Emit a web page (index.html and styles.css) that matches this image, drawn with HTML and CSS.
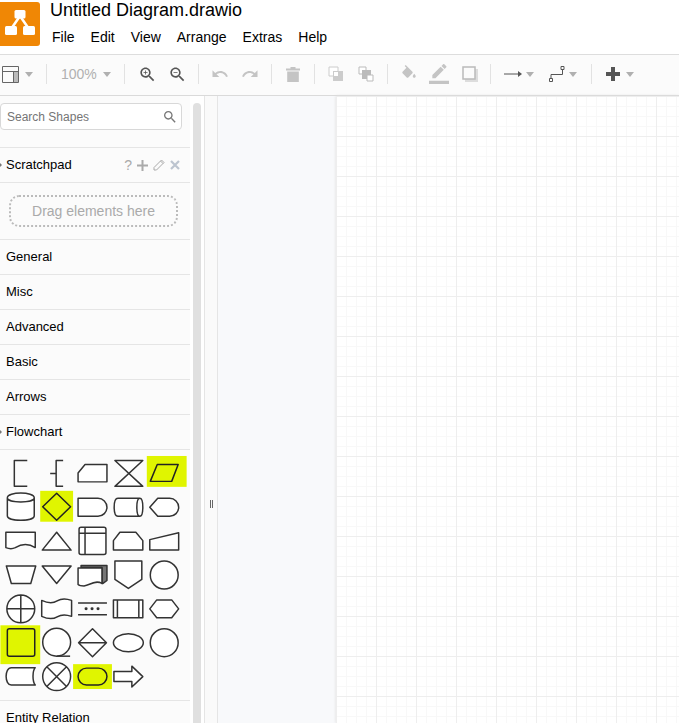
FILE: index.html
```html
<!DOCTYPE html>
<html lang="en">
<head>
  <meta charset="UTF-8">
  <meta name="viewport" content="width=device-width, initial-scale=1.0">
  <title>Untitled Diagram.drawio</title>
  <link rel="stylesheet" href="styles.css">
</head>
<body>
  <header class="header">
    <div class="logo">
      <svg width="40" height="44" viewBox="0 0 40 44">
        <path d="M20 14 L11 27 M20 14 L29 27" stroke="#fff" stroke-width="2.500" fill="none"/>
        <rect x="14.500" y="8" width="11" height="8.500" rx="1.500" fill="#fff"/>
        <rect x="5" y="24" width="12" height="9" rx="1.500" fill="#fff"/>
        <rect x="23" y="24" width="12" height="9" rx="1.500" fill="#fff"/>
      </svg>
    </div>
    <div class="titles">
      <div class="title">Untitled Diagram.drawio</div>
      <nav class="menu">
        <span>File</span><span>Edit</span><span>View</span><span>Arrange</span><span>Extras</span><span>Help</span>
      </nav>
    </div>
  </header>

  <div class="toolbar">
    <span class="tool tool-layout">
      <svg width="17" height="17" viewBox="0 0 17 17"><rect x="12" y="5" width="4" height="11" fill="#bbb"/><path d="M.5.5h16v16H.5zM.5 5.500h16M11.500 5.500v11" fill="none" stroke="#666"/></svg>
    </span>
    <span class="caret"></span>
    <span class="sep sep-first"></span>
    <span class="zoom-label">100%</span>
    <span class="caret"></span>
    <span class="sep sep-second"></span>
    <span class="tool"><svg class="on" viewBox="0 0 24 24"><path d="M15.5 14h-.79l-.28-.27C15.41 12.59 16 11.11 16 9.5 16 5.91 13.09 3 9.5 3S3 5.91 3 9.5 5.91 16 9.5 16c1.61 0 3.09-.59 4.23-1.57l.27.28v.79l5 4.99L20.49 19l-4.99-5zm-6 0C7.01 14 5 11.99 5 9.5S7.01 5 9.5 5 14 7.01 14 9.5 11.99 14 9.5 14zm2.5-4h-2v2H9v-2H7V9h2V7h1v2h2v1z"/></svg></span>
    <span class="tool"><svg class="on" viewBox="0 0 24 24"><path d="M15.5 14h-.79l-.28-.27C15.41 12.59 16 11.11 16 9.5 16 5.91 13.09 3 9.5 3S3 5.91 3 9.5 5.91 16 9.5 16c1.61 0 3.09-.59 4.23-1.57l.27.28v.79l5 4.99L20.49 19l-4.99-5zm-6 0C7.01 14 5 11.99 5 9.5S7.01 5 9.5 5 14 7.01 14 9.5 11.99 14 9.5 14zM7 9h5v1H7z"/></svg></span>
    <span class="sep sep-tight"></span>
    <span class="tool"><svg viewBox="0 0 24 24"><path d="M12.5 8c-2.65 0-5.05.99-6.9 2.6L2 7v9h9l-3.62-3.62c1.39-1.16 3.16-1.88 5.12-1.88 3.54 0 6.55 2.31 7.6 5.5l2.37-.78C21.08 11.03 17.15 8 12.5 8z"/></svg></span>
    <span class="tool"><svg viewBox="0 0 24 24"><path d="M18.4 10.6C16.55 8.99 14.15 8 11.5 8c-4.65 0-8.58 3.03-9.96 7.22L3.9 16c1.05-3.19 4.05-5.5 7.6-5.5 1.95 0 3.73.72 5.12 1.88L13 16h9V7l-3.6 3.6z"/></svg></span>
    <span class="sep"></span>
    <span class="tool"><svg class="trash" viewBox="0 0 14 15"><path d="M4.500 0h5v1.500H14v2H0v-2h4.500zM1.200 4.500h11.600V15H1.200z"/></svg></span>
    <span class="sep"></span>
    <span class="tool"><svg class="flat" viewBox="0 0 16 16"><path d="M1 1h9v9H1z" fill="#fff" stroke="#ccc"/><path d="M5 5h10v10H5z" fill="#ccc"/><path d="M6 6h4v4H6z" fill="#fff"/></svg></span>
    <span class="tool"><svg class="flat" viewBox="0 0 16 16"><path d="M1 1h7v7H1z" fill="#fff" stroke="#bbb"/><path d="M4 4h9v9H4z" fill="#bbb"/><path d="M9 9h6v6H9z" fill="#fff" stroke="#bbb"/></svg></span>
    <span class="sep"></span>
    <span class="tool"><svg viewBox="0 0 24 24"><path d="M16.56 8.94L7.62 0 6.21 1.41l2.38 2.38-5.15 5.15c-.59.59-.59 1.54 0 2.12l5.5 5.5c.29.29.68.44 1.06.44s.77-.15 1.06-.44l5.5-5.5c.59-.58.59-1.53 0-2.12zM19 11.5s-2 2.17-2 3.5c0 1.1.9 2 2 2s2-.9 2-2c0-1.33-2-3.5-2-3.5z"/></svg></span>
    <span class="tool"><svg class="wide" viewBox="0 0 24 24"><path d="M17.75 7L14 3.25l-10 10V17h3.75l10-10zm2.96-2.96c.39-.39.39-1.02 0-1.41L18.37.29c-.39-.39-1.02-.39-1.41 0L15 2.25 18.75 6l1.96-1.96zM0 20h24v4H0z"/></svg></span>
    <span class="tool tool-shadow"><svg class="flat" viewBox="0 0 16 16"><path d="M3 3h13v13H3z" fill="#ddd"/><path d="M1 1h12v12H1z" fill="#fbfbfb" stroke="#bbb" stroke-width="1.500"/></svg></span>
    <span class="sep sep-tight"></span>
    <span class="edge">
      <svg width="18" height="8" viewBox="0 0 18 8"><path d="M0 4h15" stroke="#555" fill="none"/><path d="M14 1l4 3-4 3z" fill="#555"/></svg>
    </span>
    <span class="caret caret-near"></span>
    <span class="edge edge-way">
      <svg width="16" height="16" viewBox="0 0 16 16"><path d="M2 13V8.500h11.500V3" stroke="#555" fill="none"/><path d="M.5 12.500h3v3h-3zM12 .5h3v3h-3z" fill="#fff" stroke="#555"/></svg>
    </span>
    <span class="caret caret-near"></span>
    <span class="sep sep-edge"></span>
    <span class="edge edge-plus">
      <svg width="14" height="14" viewBox="0 0 14 14"><path d="M5 0h4v5h5v4H9v5H5V9H0V5h5z" fill="#555"/></svg>
    </span>
    <span class="caret"></span>
  </div>

  <div class="main">
    <aside class="sidebar">
      <div class="panel">
        <div class="search">
          <span class="search-text">Search Shapes</span>
          <svg width="16" height="16" viewBox="0 0 24 24"><path fill="#777" d="M15.500 14h-.79l-.28-.27C15.410 12.590 16 11.110 16 9.500 16 5.910 13.090 3 9.500 3S3 5.910 3 9.500 5.910 16 9.500 16c1.610 0 3.090-.59 4.230-1.570l.27.28v.79l5 4.990L20.490 19l-4.990-5zm-6 0C7.010 14 5 11.990 5 9.500S7.010 5 9.500 5 14 7.010 14 9.500 11.990 14 9.500 14z"/></svg>
        </div>
        <div class="row open scratch">
          <span class="row-name">Scratchpad</span>
          <span class="scratch-tools">
            <span class="help">?</span>
            <svg width="11" height="11" viewBox="0 0 11 11"><path d="M4.500 0h2v4.500H11v2H6.500V11h-2V6.500H0v-2h4.500z" fill="#aaa"/></svg>
            <svg width="12" height="12" viewBox="0 0 12 12"><path d="M1 8.500L8.500 1 11 3.500 3.500 11H1zM7.500 2l2.500 2.500" fill="none" stroke="#aaa"/></svg>
            <svg width="10" height="10" viewBox="0 0 10 10"><path d="M1 1l8 8M9 1l-8 8" stroke="#bcc4cf" stroke-width="2.200" fill="none"/></svg>
          </span>
        </div>
        <div class="drop-area"><div class="drop-box">Drag elements here</div></div>
        <div class="row">General</div>
        <div class="row">Misc</div>
        <div class="row">Advanced</div>
        <div class="row">Basic</div>
        <div class="row">Arrows</div>
        <div class="row open">Flowchart</div>
        <svg class="shapes" width="190" height="251" viewBox="0 450 190 251">
          <rect class="hl" x="147" y="456" width="40" height="31"/>
          <rect class="hl" x="40" y="491" width="33" height="31"/>
          <rect class="hl" x="0" y="626" width="40" height="39"/>
          <rect class="hl" x="73" y="665" width="39" height="25"/>
          <g class="shape">
            <path class="bare" d="M27 460.500H14V486.500H27"/>
            <path class="bare" d="M63 460.500H56V486.500H63M56 473.500H50"/>
            <path d="M78 482V473L85 464.500H107V482Z"/>
            <path d="M115 460.500H143L115 486.500H143Z"/>
            <path class="on-hl" d="M157.500 464.500H178.500L172 481.500H150.500Z"/>

            <path d="M7 498C7 491.500 34 491.500 34 498V516C34 522 7 522 7 516ZM7 498C7 503.500 34 503.500 34 498"/>
            <path class="on-hl" d="M56.500 493.500L70.500 507L56.500 520.500L42.500 507Z"/>
            <path d="M78 498.500H98A9 9 0 0 1 98 516.500H78Z"/>
            <path d="M118 498.500H140C144 498.500 144 516.500 140 516.500H118C113 516.500 113 498.500 118 498.500ZM140 498.500C136 498.500 136 516.500 140 516.500"/>
            <path d="M150 507.500L158 498.500H170A9 9 0 0 1 170 516.500H158Z"/>

            <path d="M5.500 532.500H35V548C27 543 20 545 15 548C11 550 8 549 5.500 548Z"/>
            <path d="M56.500 532.500L71 550.500H42Z"/>
            <path d="M81 527.500H104Q106 527.500 106 529.500V553Q106 555 104 555H81Q79 555 79 553V529.500Q79 527.500 81 527.500ZM79 533.500H106M85 527.500V555"/>
            <path d="M113.500 541L120 532.500H136L143 541V550.500H113.500Z"/>
            <path d="M150 540L179 533V550.500H150Z"/>

            <path d="M6 566.500H35.500L30.500 584H11Z"/>
            <path d="M42 566.500H71L56.500 584Z"/>
            <path class="stack" d="M81 566H107V581L103 584H102V568H81Z"/>
            <path d="M78 568.500H102V584C95 580 90 586 84 586.500C81 586.500 79 586 78 585Z"/>
            <path d="M115 561.500H142V580L128.500 589L115 580Z"/>
            <circle cx="164.500" cy="575.500" r="14"/>

            <path d="M6.500 609.500A14 14 0 1 0 34.500 609.500A14 14 0 1 0 6.500 609.500ZM6.500 609.500H34.500M20.500 595.500V623.500"/>
            <path d="M41.500 601C48 604 53 604 57 601.500C61 599 66 599 71.500 601V617C66 615 61 615 57 617.500C53 620 48 620 41.500 617Z"/>
            <path class="bare" d="M78 603.500H107M78 615.500H107"/>
            <path class="dots" d="M86 609.500h.1M92 609.500h.1M98 609.500h.1"/>
            <path d="M113.500 600.500H143V618.500H113.500ZM117.500 600.500V618.500M139 600.500V618.500"/>
            <path d="M150 609.500L157 600.500H172L179 609.500L172 618.500H157Z"/>

            <rect class="on-hl" x="7" y="629.500" width="27.500" height="27.500" rx="2"/>
            <circle cx="56.500" cy="643" r="14"/>
            <path class="bare" d="M56.500 657H70"/>
            <path d="M92.500 629.500L106.500 643.500L92.500 657.500L78.500 643.500ZM78.500 643.500H106.500"/>
            <ellipse cx="128.500" cy="643.500" rx="15" ry="9"/>
            <circle cx="164.500" cy="643.500" r="14"/>

            <path d="M11 668.500H35C32 672 32 682 35 686H11C4 686 4 668.500 11 668.500Z"/>
            <path d="M42.500 677.500A14 14 0 1 0 70.500 677.500A14 14 0 1 0 42.500 677.500ZM46.600 667.600L66.400 687.400M66.400 667.600L46.600 687.400"/>
            <rect class="on-hl" x="78" y="669" width="29" height="17" rx="8.500"/>
            <path d="M114 672.500H132V667L143 677.500L132 688V682.500H114Z"/>
          </g>
        </svg>
        <div class="row">Entity Relation</div>
      </div>
      <div class="scroll-track"><div class="scroll-thumb"></div></div>
    </aside>
    <div class="splitter"><span class="grip"></span></div>
    <div class="backdrop"></div>
    <div class="page"></div>
  </div>
</body>
</html>
```

FILE: styles.css
```css
* { box-sizing: border-box; }
html, body { height: 100%; }
body {
  margin: 0;
  font-family: "Liberation Sans", Arial, sans-serif;
  color: #000;
  background: #fff;
  display: flex; flex-direction: column;
  overflow: hidden;
}

/* header */
.header {
  height: 55px;
  flex: none;
  display: flex;
  background: #fff;
  border-bottom: 1px solid #ddd;
}
.logo {
  width: 40px;
  height: 44px;
  margin-top: 2px;
  background: #f08705;
  border-radius: 0 3px 3px 0;
}
.titles { margin-left: 10px; }
.title {
  font-size: 18px;
  line-height: 20px;
}
.menu {
  display: flex;
  gap: 16px;
  margin-top: 7px;
  padding-left: 2px;
  font-size: 14px;
  line-height: 20px;
}

/* toolbar */
.toolbar {
  height: 41px;
  flex: none;
  display: flex;
  align-items: center;
  padding-bottom: 2px;
  background: #fbfbfb;
  border-bottom: 1px solid #dadada;
}
.tool {
  width: 30px;
  height: 24px;
  display: flex; align-items: center; justify-content: center;
}
.tool svg { width: 18px; height: 18px; fill: #c4c4c4; }
.tool svg.on { width: 19px; height: 19px; fill: #555; }
.tool svg.flat { width: 16px; height: 16px; }
.tool svg.trash { width: 14px; height: 15px; }
.tool svg.wide { width: 20px; height: 20px; }
.tool-layout { width: 17px; margin-left: 2px; }
.tool-layout svg { width: 17px; height: 17px; }
.tool-shadow { margin-left: 1px; }
.caret {
  width: 0; height: 0;
  margin-left: 6px;
  border-left: 4px solid transparent;
  border-right: 4px solid transparent;
  border-top: 5px solid #b0b0b0;
}
.caret-near { margin-left: 4px; }
.sep {
  width: 1px;
  height: 20px;
  margin: 0 6px;
  background: #e2e2e2;
}
.sep-first { margin: 0 14px 0 13px; }
.sep-second { margin: 0 8px 0 13px; }
.sep-tight { margin-left: 5px; }
.sep-edge { margin-left: 14px; }
.zoom-label { font-size: 14px; color: #b0b0b0; }
.edge { display: flex; align-items: center; margin-left: 7px; }
.edge-way { margin-left: 15px; }
.edge-plus { margin-left: 8px; }

/* layout */
.main { flex: 1; display: flex; min-height: 0; }
.sidebar { width: 204px; flex: none; display: flex; background: #fff; }
.panel {
  width: 190px;
  flex: none;
  background: #fbfbfb;
  overflow: hidden;
  padding-top: 7px;
}
.scroll-track { flex: 1; padding: 7px 3px 0; }
.scroll-thumb { width: 8px; height: 100%; background: #e0e0e0; border-radius: 4px 4px 0 0; }
.splitter {
  width: 14px;
  flex: none;
  background: #fafafa;
  border-left: 1px solid #e5e5e5;
  border-right: 1px solid #e5e5e5;
  display: flex; align-items: center; justify-content: center;
  padding-top: 188px;
}
.grip {
  width: 3px;
  height: 8px;
  border-left: 1px solid #666;
  border-right: 1px solid #666;
}
.backdrop { width: 118px; flex: none; background: #f8f9fb; }
.page {
  flex: 1;
  background-color: #fff;
  box-shadow: 0 0 3px #ddd;
  background-image:
    linear-gradient(#eee 1px, transparent 1px),
    linear-gradient(90deg, #eee 1px, transparent 1px),
    linear-gradient(#f8f8f8 1px, transparent 1px),
    linear-gradient(90deg, #f8f8f8 1px, transparent 1px);
  background-size: 40px 40px, 40px 40px, 10px 10px, 10px 10px;
}

/* sidebar */
.search {
  height: 27px;
  width: 182px;
  margin-bottom: 17px;
  display: flex; align-items: center; justify-content: space-between;
  padding: 0 3px 0 6px;
  background: #fff;
  border: 1px solid #d8d8d8;
  border-radius: 4px;
}
.search-text { font-size: 12px; color: #757575; }
.row {
  height: 35px;
  padding-left: 6px;
  display: flex; align-items: center;
  font-size: 13px;
  line-height: 16px;
  position: relative;
  border-top: 1px solid #e5e5e5;
}
.row.open::before {
  content: "";
  position: absolute;
  left: 0; top: 15px;
  border-left: 2px solid #777;
  border-top: 2px solid transparent;
  border-bottom: 2px solid transparent;
}
.scratch { justify-content: space-between; padding-right: 10px; }
.scratch-tools { display: flex; align-items: center; gap: 5px; }
.help { font-size: 14px; color: #aaa; }
.drop-area { height: 57px; padding: 12px 12px 0 9px; border-top: 1px solid #e5e5e5; }
.drop-box {
  height: 32px;
  display: flex; align-items: center; justify-content: center;
  border: 2px dotted #bbb;
  border-radius: 10px;
  font-size: 14px;
  color: #aaa;
}
.shapes { display: block; border-top: 1px solid #e5e5e5; }
.hl { fill: #e0f500; }
.shape { fill: #fff; stroke: #333; stroke-width: 1.5; stroke-linejoin: round; }
.shape .bare { fill: none; }
.shape .on-hl { fill: #e0f500; stroke: #222; }
.shape .stack { fill: #777; }
.shape .dots { fill: none; stroke-width: 3; stroke-linecap: round; stroke: #333; }
```
